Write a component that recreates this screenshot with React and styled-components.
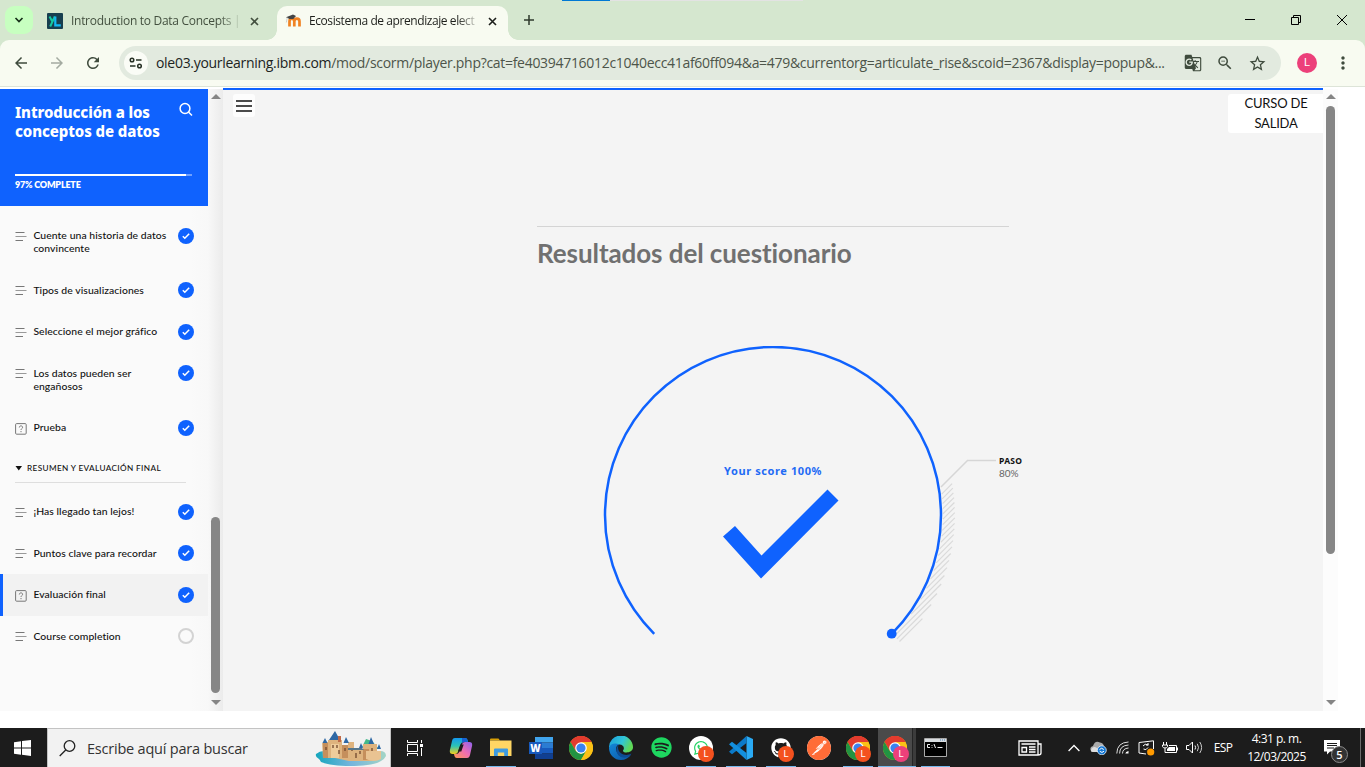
import React from "react";
import styled, { createGlobalStyle } from "styled-components";
import { MdArrowBack, MdArrowForward, MdRefresh, MdStarOutline, MdMoreVert, MdGTranslate, MdZoomOut } from "react-icons/md";
import { FaSpotify, FaWhatsapp, FaGithub } from "react-icons/fa";
import { SiPostman } from "react-icons/si";

const BLUE = "#0f62fe";
const UI = `"Open Sans", "Noto Sans", sans-serif`;
const LATO = `Lato, "Open Sans", sans-serif`;

const GlobalStyle = createGlobalStyle`
  * { box-sizing: border-box; }
  body { margin: 0; background: #fff; overflow: hidden; }
  svg { display: block; flex: none; }
`;

const Screen = styled.div`
  width: 1365px;
  height: 767px;
  display: flex;
  flex-direction: column;
  overflow: hidden;
  font-family: ${UI};
`;

/* ---------- browser frame ---------- */

const TabStrip = styled.header`
  position: relative;
  height: 40px;
  flex: none;
  display: flex;
  align-items: flex-start;
  padding: 6px 0 0 5px;
  background: #d5e7cf;
`;

const LoadStrip = styled.div`
  position: absolute;
  top: 0;
  left: 562px;
  width: 241px;
  height: 1px;
  background: linear-gradient(to right, #0078d4 48px, #e3e3e3 48px);
`;

const TabSearch = styled.div`
  width: 28px;
  height: 28px;
  border-radius: 9px;
  background: #c7ffc0;
  display: flex;
  align-items: center;
  justify-content: center;
`;

const Tab = styled.div`
  position: relative;
  display: flex;
  align-items: center;
  width: ${(p) => p.$width}px;
  height: 34px;
  margin-left: ${(p) => p.$gap}px;
  padding: 0 8px 4px 8px;
  border-radius: 10px 10px 0 0;
  background: ${(p) => (p.$active ? "#f8fbf1" : "transparent")};
  color: ${(p) => (p.$active ? "#1d1f1b" : "#43503f")};
  &::before,
  &::after {
    content: "";
    display: ${(p) => (p.$active ? "block" : "none")};
    position: absolute;
    bottom: 0;
    width: 10px;
    height: 10px;
  }
  &::before {
    left: -10px;
    background: radial-gradient(circle at 0 0, transparent 9.5px, #f8fbf1 10px);
  }
  &::after {
    right: -10px;
    background: radial-gradient(circle at 100% 0, transparent 9.5px, #f8fbf1 10px);
  }
`;

const TabTitle = styled.span`
  flex: none;
  width: 170px;
  margin: 0 ${(p) => p.$after}px 0 ${(p) => p.$before}px;
  font-size: 12px;
  letter-spacing: ${(p) => p.$spacing}px;
  line-height: 18px;
  white-space: nowrap;
  mask-image: linear-gradient(to right, #000 148px, transparent 172px);
`;

const NewTab = styled.div`
  margin: 8px 0 0 15px;
`;

const WindowButtons = styled.div`
  display: flex;
  margin-left: auto;
  height: 28px;
  svg { width: 46px; height: 28px; }
`;

const ToolbarBack = styled.div`
  background: #d5e7cf;
  flex: none;
`;

const Toolbar = styled.div`
  height: 46px;
  display: flex;
  align-items: center;
  flex: none;
  padding-left: 12px;
  border-radius: 9px 9px 0 0;
  background: #f8fbf1;
  color: #3f4b3d;
`;

const NavIcons = styled.div`
  display: flex;
  gap: 18px;
  width: 107px;
  .dim { color: #a4aba1; }
`;

const AddressBar = styled.div`
  display: flex;
  align-items: center;
  width: 1162px;
  height: 34px;
  padding: 0 14px 0 5px;
  border-radius: 17px;
  background: #e2eadf;
`;

const SiteInfo = styled.div`
  width: 24px;
  height: 24px;
  border-radius: 50%;
  background: #fafcf6;
  display: flex;
  align-items: center;
  justify-content: center;
`;

const Url = styled.div`
  flex: 1;
  margin-left: 8px;
  padding-bottom: 1px;
  font-size: 14px;
  letter-spacing: -0.298px;
  white-space: nowrap;
  color: #4d554a;
  b { font-weight: 400; color: #20241e; }
`;

const BarActions = styled.div`
  display: flex;
  align-items: center;
  gap: 14px;
`;

const Avatar = styled.div`
  width: 20px;
  height: 20px;
  margin: 0 16px 0 16px;
  border-radius: 50%;
  background: #ec407a;
  color: #fff;
  font: 11px/20px Roboto, sans-serif;
  text-align: center;
`;

/* ---------- course page ---------- */

const Page = styled.main`
  height: 625px;
  flex: none;
  display: flex;
  border-top: 1px solid #dde4d8;
  font-family: ${LATO};
  background: #fff;
`;

const Sidebar = styled.aside`
  width: 223px;
  height: 622px;
  margin-top: 2px;
  display: flex;
  background: linear-gradient(to right, #fafafa 190px, #f8f8f8 208px, #ebebeb 223px);
`;

const SidebarBody = styled.div`
  width: 208px;
`;

const CourseHead = styled.div`
  height: 117px;
  padding: 14px 15px 0 15px;
  background: ${BLUE};
  color: #fff;
`;

const CourseTop = styled.div`
  display: flex;
  justify-content: space-between;
  height: 71px;
  svg { margin-top: -1px; }
`;

const CourseTitle = styled.h1`
  margin: 0;
  font: 800 15px/19px "Noto Sans", sans-serif;
  letter-spacing: -0.1px;
  white-space: nowrap;
`;

const Progress = styled.div`
  width: 177px;
  height: 2px;
  background: linear-gradient(to right, #fff 171px, #6fa0fe 171px);
`;

const ProgressText = styled.div`
  margin-top: 3px;
  font-size: 9px;
  font-weight: 800;
  line-height: 12px;
  letter-spacing: -0.2px;
`;

const Lessons = styled.nav`
  padding-top: 9.3px;
`;

const Lesson = styled.div`
  display: flex;
  height: ${(p) => (p.$double ? 54.4 : 41.55)}px;
  padding: 14px 14px 0 ${(p) => (p.$active ? 12 : 15)}px;
  background: ${(p) => (p.$active ? "#f2f2f2" : "transparent")};
  border-left: ${(p) => (p.$active ? `3px solid ${BLUE}` : "0")};
`;

const LessonIcon = styled.div`
  width: 18.4px;
  padding-top: 1.4px;
`;

const LessonName = styled.div`
  flex: 1;
  white-space: pre;
  color: #111;
  font-size: 10.4px;
  line-height: 13px;
  font-weight: 500;
  letter-spacing: 0.07px;
`;

const Status = styled.div`
  width: 16px;
  height: 16px;
  margin-top: -1.5px;
  border-radius: 50%;
  background: ${(p) => (p.$done ? BLUE : "transparent")};
  border: ${(p) => (p.$done ? "0" : "2px solid #d3d3d3")};
  display: flex;
  align-items: center;
  justify-content: center;
`;

const Section = styled.div`
  display: flex;
  align-items: center;
  width: 171px;
  height: 34.5px;
  margin: 0 0 8px 15px;
  padding-top: 6px;
  border-bottom: 1px solid #dedede;
  color: #111;
  font-size: 8.2px;
  font-weight: 500;
  letter-spacing: 0.38px;
  white-space: nowrap;
  svg { margin-right: 4px; }
`;

const ScrollTrack = styled.div`
  width: 15px;
  height: 622px;
  margin-top: ${(p) => p.$top || 0}px;
  display: flex;
  flex-direction: column;
  align-items: center;
  background: ${(p) => p.$bg || "transparent"};
  padding: 5px 0 6px;
`;

const ScrollArrow = styled.i`
  border: 5px solid transparent;
  border-top: ${(p) => (p.$up ? "0" : "5px solid #858585")};
  border-bottom: ${(p) => (p.$up ? "5px solid #858585" : "0")};
`;

const ScrollThumb = styled.div`
  width: 9px;
  height: ${(p) => p.$height}px;
  margin-top: ${(p) => p.$offset}px;
  margin-bottom: auto;
  border-radius: 5px;
  background: #868686;
`;

const Content = styled.section`
  width: 1100px;
  height: 623px;
  margin-top: 1px;
  display: flex;
  flex-direction: column;
  border-top: 2px solid ${BLUE};
  background: #f4f4f4;
`;

const ContentBar = styled.div`
  height: 136px;
  display: flex;
  justify-content: space-between;
  align-items: flex-start;
  padding: 4px 0 0 10px;
`;

const MenuButton = styled.div`
  width: 22px;
  height: 23px;
  border-radius: 3px;
  background: #fdfdfd;
  display: flex;
  align-items: center;
  justify-content: center;
`;

const ExitLabel = styled.span`
  display: block;
  margin-top: -1px;
  padding-left: 1px;
`;

const ExitButton = styled.div`
  width: 95px;
  height: 39px;
  border-radius: 3px 0 0 3px;
  background: #fff;
  color: #111;
  text-align: center;
  font-size: 13px;
  line-height: 20px;
  letter-spacing: -0.2px;
  white-space: pre;
`;

const Results = styled.div`
  width: 520px;
  margin-left: 314px;
`;

const ResultsTitle = styled.h2`
  margin: 0;
  width: 472px;
  border-top: 1px solid #d4d4d4;
  padding-top: 9px;
  font-size: 26px;
  line-height: 34px;
  font-weight: 700;
  letter-spacing: -0.08px;
  color: #707070;
  white-space: nowrap;
`;

const Gauge = styled.div`
  position: relative;
  height: 320px;
  margin-top: 76px;
`;

const Score = styled.div`
  position: absolute;
  left: 187px;
  top: 117px;
  width: 98px;
  text-align: center;
  font: 700 11px/16px "Noto Sans", sans-serif;
  letter-spacing: 0.6px;
  color: #1f6bf5;
  white-space: nowrap;
`;

const PassMark = styled.div`
  position: absolute;
  left: 462px;
  top: 109px;
  font-size: 10px;
  line-height: 12px;
  color: #666;
  b { display: block; font: 700 8.5px/12px "Noto Sans", sans-serif; color: #111; letter-spacing: 0.3px; }
`;

/* ---------- taskbar ---------- */

const Desk = styled.footer`
  height: 39px;
  margin-top: auto;
  flex: none;
  display: flex;
  background: #1c1c1c;
  color: #fff;
`;

const StartButton = styled.div`
  width: 47px;
  display: flex;
  align-items: center;
  justify-content: center;
  padding-right: 2px;
`;

const SearchBox = styled.div`
  width: 344px;
  height: 39px;
  display: flex;
  align-items: center;
  padding: 1px 3px 0 11px;
  border: 1px solid #c3c3c3;
  border-bottom: 0;
  background: #f2f2f2;
  color: #333;
  font-size: 14.5px;
  letter-spacing: -0.21px;
  span { flex: 1; margin-left: 11px; white-space: nowrap; }
`;

const AppSlot = styled.div`
  position: relative;
  width: ${(p) => p.$width || 40}px;
  margin-left: ${(p) => p.$gap || 0}px;
  display: flex;
  align-items: center;
  justify-content: center;
  background: ${(p) => (p.$active ? "linear-gradient(to right, #4a4a4a 34px, #252525 34px, #252525 35px, #3c3c3c 35px)" : "transparent")};
  padding-right: ${(p) => (p.$active ? 4 : 0)}px;
  &::after {
    content: "";
    display: ${(p) => (p.$open ? "block" : "none")};
    position: absolute;
    bottom: 0;
    left: ${(p) => (p.$active ? 0 : 5)}px;
    right: ${(p) => (p.$active ? 0 : 5)}px;
    height: 1px;
    background: #76b9ed;
  }
`;

const Badge = styled.span`
  position: absolute;
  left: calc(50% - ${(p) => (p.$shift || 3)}px);
  top: 18px;
  width: 16px;
  height: 16px;
  border-radius: 50%;
  background: ${(p) => p.$color || "#f4511e"};
  color: #fff;
  font: 9.5px/16px Roboto, sans-serif;
  text-align: center;
`;

const Disc = styled.div`
  width: 24px;
  height: 24px;
  border-radius: 50%;
  display: flex;
  align-items: center;
  justify-content: center;
  background: ${(p) => p.$bg};
  color: ${(p) => p.$fg};
`;

const WordLetter = styled.span`
  position: absolute;
  left: 8px;
  top: 14px;
  width: 13px;
  height: 12px;
  background: #185abd;
  font: 800 10px/12px "Open Sans", sans-serif;
  text-align: center;
`;

const WordSlot = styled.div`
  padding-left: 6px;
`;

const Tray = styled.div`
  margin-left: auto;
  display: flex;
  align-items: center;
`;

const TrayIcon = styled.div`
  width: ${(p) => p.$width || 24}px;
  height: 39px;
  margin-right: ${(p) => p.$gap || 0}px;
  display: flex;
  align-items: center;
  justify-content: center;
`;

const Lang = styled.div`
  width: 34px;
  text-align: center;
  font-size: 12px;
  letter-spacing: -0.6px;
`;

const Clock = styled.div`
  width: 73px;
  margin-right: 1px;
  text-align: center;
  font-size: 12px;
  line-height: 18px;
  letter-spacing: -0.5px;
  white-space: nowrap;
  padding-top: 1px;
`;

const PeekLine = styled.div`
  width: 1px;
  height: 39px;
  margin: 0 4px 0 6px;
  background: #6b6b6b;
`;

const Count = styled.span`
  position: absolute;
  left: 17px;
  top: 18px;
  width: 17px;
  height: 17px;
  border: 1px solid #8a8a8a;
  border-radius: 50%;
  background: #333;
  font: 600 11px/15px "Open Sans", sans-serif;
  text-align: center;
`;

const NoticeSlot = styled.div`
  position: relative;
  width: 40px;
  height: 39px;
  padding: 12px 0 0 10px;
`;

/* ---------- drawings ---------- */

const CloseIcon = () => (
  <svg width="9" height="9" viewBox="0 0 9 9" stroke="currentColor" strokeWidth="1.6" fill="none"><path d="M1 1l7 7M8 1L1 8" /></svg>
);

const LearningLogo = () => (
  <svg width="16" height="16" viewBox="0 0 16 16" fill="none">
    <rect width="16" height="16" rx="1" fill="#173f4f" />
    <path d="M2.5 3.5L5 8M7.8 3.5L3.2 13.5" stroke="#16c9a2" strokeWidth="2" />
    <path d="M8.3 3.5v8.8h5.5" stroke="#12b9f5" strokeWidth="2.2" />
  </svg>
);

const MoodleLogo = () => (
  <svg width="17" height="16" viewBox="0 0 17 16" fill="none">
    <path d="M4.500 13.500V8.500c0-3.800 4.800-3.800 4.800 0v5M9.300 8.500c0-3.800 5.200-3.800 5.200 0v5" stroke="#f08223" strokeWidth="2.7" />
    <path d="M1 4.3L8 1.500l3 1.400L8.300 6H4.6z" fill="#444" /><path d="M2.3 4.5l-1 5" stroke="#bbb" strokeWidth=".7" />
  </svg>
);

const LinesIcon = () => (
  <svg width="12" height="12" viewBox="0 0 12 12" fill="none" strokeWidth="1">
    <path d="M0.5 1.5h9M.5 9.5h7.5" stroke="#777" /><path d="M.5 5.5h11" stroke="#999" />
  </svg>
);

const QuizIcon = () => (
  <svg width="12" height="12" viewBox="0 0 12 12" fill="none" stroke="#777">
    <rect x=".6" y=".6" width="10.6" height="10.6" rx="1" />
    <path d="M4.3 4.5c0-2.2 3.3-2.1 3.3-.2 0 1.2-1.6 1.3-1.6 2.7M6 8v1.2" />
  </svg>
);

const TickIcon = () => (
  <svg width="8" height="8" viewBox="0 0 8 8" fill="none" stroke="#fff" strokeWidth="1.5"><path d="M.8 4.2l2 2L7.2 1.7" /></svg>
);

const ChromeIcon = () => (
  <svg width="24" height="24" viewBox="0 0 24 24">
    <circle cx="12" cy="12" r="12" fill="#fbc116" />
    <path d="M12 12L1.6 6A12 12 0 0 1 22.4 6z" fill="#e33b2e" />
    <path d="M12 6h10.4a12 12 0 0 0-20.8 0L6.8 15z" fill="#e33b2e" />
    <path d="M1.6 6A12 12 0 0 0 12 24l5.2-9-5.2 3-5.2-3z" fill="#229342" />
    <path d="M12 6h10.4A12 12 0 0 1 12 24l5.2-9z" fill="#fbc116" />
    <circle cx="12" cy="12" r="5.8" fill="#fff" /><circle cx="12" cy="12" r="4.6" fill="#3b82f0" />
  </svg>
);

const CopilotIcon = () => (
  <svg width="24" height="22" viewBox="0 0 24 22">
    <defs>
      <linearGradient id="cpa" x1="0" y1="0" x2="0" y2="1"><stop offset="0" stopColor="#1499ef" /><stop offset=".5" stopColor="#2cc4b4" /><stop offset="1" stopColor="#f5cf1c" /></linearGradient>
      <linearGradient id="cpb" x1="1" y1="0" x2="0" y2="1"><stop offset="0" stopColor="#8d62f0" /><stop offset=".5" stopColor="#ee6db2" /><stop offset="1" stopColor="#ff9850" /></linearGradient>
    </defs>
    <path d="M6 1h10c2 0 2.5 1.5 3 4h-4c-2 0-3 1-3.6 3L9.300 14c-.6 2-1.500 3-3.500 3H3.500C.5 17 .5 14 1.200 12L3 4c.5-2 1.200-3 3-3z" fill="url(#cpa)" />
    <path d="M13 1h3c2 0 2.500 1.500 3 4h-4l-2 1z" fill="#1762d2" />
    <path d="M18 21H8c-2 0-2.500-1.500-3-4h2c2 0 3-1 3.600-3l2.200-6c.6-2 1.500-3 3.500-3h4.200c3 0 3 3 2.300 5L21 18c-.5 2-1.200 3-3 3z" fill="url(#cpb)" />
    <path d="M11.300 7.500h3.400l-2.400 7H8.900z" fill="#1c1c1c" />
  </svg>
);

const FolderIcon = () => (
  <svg width="22" height="19" viewBox="0 0 22 19">
    <path d="M0 1.500Q0 .5 1 .5h7.500l1.500 2h-10z" fill="#d9a006" /><path d="M0 2.500h21.500V18H0z" fill="#ffd664" />
    <path d="M4 18v-6.500q0-1 1-1h12q1 0 1 1V18h-3.800v-3.500H7.800V18z" fill="#3f9be0" />
  </svg>
);

const WordPages = () => (
  <svg width="18" height="22" viewBox="0 0 18 22">
    <path d="M0 0h18v5.500H0z" fill="#41a5ee" /><path d="M0 5.500h18V11H0z" fill="#2b7cd3" /><path d="M0 11h18v5.500H0z" fill="#185abd" /><path d="M0 16.500h18V22H0z" fill="#103f91" />
  </svg>
);

const EdgeIcon = () => (
  <svg width="24" height="24" viewBox="0 0 24 24">
    <defs>
      <linearGradient id="ega" x1="0" y1="0" x2="1" y2=".4"><stop offset="0" stopColor="#199bdb" /><stop offset=".6" stopColor="#31c6d8" /><stop offset="1" stopColor="#60d957" /></linearGradient>
      <linearGradient id="egb" x1="0" y1="0" x2="1" y2="1"><stop offset="0" stopColor="#1487d8" /><stop offset="1" stopColor="#0b55a4" /></linearGradient>
    </defs>
    <path d="M0 12A12 12 0 0 1 24 11c.2 4-3.500 5.500-6.500 5.500-3 0-4-1.500-3.200-2.500 1.500-2 .2-5.500-4-5.500C5 8.500 1 11 0 12z" fill="url(#ega)" />
    <path d="M0 12C1 7 7 6.500 10.300 8.500 7 9.500 6.800 12.500 7.500 15c1.200 4 6 6.500 10 5.500 2-.5 4-1.500 4.800-2.300C20 22 16 24 12 24A12 12 0 0 1 0 12z" fill="url(#egb)" />
    <path d="M10.500 8.600C8 10.500 9 15 12 17.300c3 2.300 7.500 2 10.500.3-1.500 3-5 4.500-8.500 4C8 21 4.500 12 10.500 8.600z" fill="#0d4c94" />
  </svg>
);

const CodeIcon = () => (
  <svg width="24" height="24" viewBox="0 0 24 24">
    <path d="M17.500 0L24 3v18l-6.500 3z" fill="#2aaaf3" />
    <path d="M17.500 0v7L3 18.300 0 15.700z" fill="#0b7ac9" /><path d="M17.500 24v-7L3 5.700 0 8.300z" fill="#138fdd" />
  </svg>
);

const TerminalIcon = () => (
  <svg width="23" height="19" viewBox="0 0 23 19">
    <path d="M.5.5h22v18H.5z" fill="#000" stroke="#aaa" /><path d="M1 1h21v3H1z" fill="#d9dde0" /><path d="M16 2h1M18 2h1M20 2h1" stroke="#4a80b5" />
    <path d="M6 6.500H3.500v3H6M8 7v.8M8 9v.8M10 6l1.500 4M13.500 9.500h5" stroke="#eee" fill="none" />
  </svg>
);

const Castle = () => (
  <svg width="72" height="36" viewBox="0 0 72 36">
    <defs><linearGradient id="sea" x1="0" y1="0" x2="1" y2="0"><stop offset="0" stopColor="#16a6bd" /><stop offset=".5" stopColor="#75b5dd" /><stop offset="1" stopColor="#a3d5c6" /></linearGradient></defs>
    <path d="M1 23q6-5 12-2l52-1q6 0 6 5-2 4-5 5c-8 6-46 7-60 1q-1-2-2-3Q0 26 1 23z" fill="url(#sea)" />
    <path d="M47 16l4-8 6 2 7 8z" fill="#43b98a" />
    <path d="M7 12l6-1V9h14v5h6V11h6v7h9v-5h14v12l-5 5H34l-14-3H8z" fill="#deb37e" />
    <path d="M8 12h5v15H8zM27 14h6v13h-6zM48 18h6v11h-6z" fill="#c58f5c" />
    <path d="M51 20h15v8q-7 4-15 0z" fill="#e9c392" /><path d="M16 13h8v14h-8z" fill="#efcc9b" />
    <path d="M14 9l6-9 5 9zM7.500 12l2.500-5 2.500 5zM28.500 12L31 6l3 6zM53.500 13L56 6l3 7zM44 17l2-5 2 5zM62 18l2-5 2 5z" fill="#2e68a5" />
    <path d="M23 5h3v6h-3z" fill="#c06a48" />
    <path d="M18 14v3M22 14v3M11 16v3M37 17v3M30 17v3M45 20v3M57 17v3M41 22v5M24 19v4" stroke="#70492f" strokeWidth="1.300" />
    <path d="M33 17h14l2 2H33z" fill="#56768b" />
  </svg>
);

const CX = 236;
const CY = 169;
const hatches = Array.from({ length: 21 }, (_, i) => {
  const d = 178.9 - i * 3.72;
  const inner = d < 170 ? Math.sqrt(170 * 170 - d * d) : 0;
  const outer = Math.sqrt(181.8 * 181.8 - d * d);
  const at = (t) => `${(CX + (d + t) * Math.SQRT1_2).toFixed(1)} ${(CY + (d - t) * Math.SQRT1_2).toFixed(1)}`;
  return `M${at(inner)}L${at(outer)}`;
}).join("");

const GaugeArt = () => (
  <svg width="480" height="320" viewBox="0 0 480 320" fill="none">
    <path d={hatches} stroke="#dadada" strokeWidth="1.200" />
    <path d="M404 141L430.500 114.500H459" stroke="#d6d6d6" strokeWidth="1.500" />
    <path d="M117.200 287.800A168 168 0 1 1 354.800 287.800" stroke={BLUE} strokeWidth="2.500" />
    <circle cx="354.700" cy="287.700" r="4.900" fill={BLUE} />
    <path d="M186 190.500L198 180 224.500 209.500 290.500 143.500 301.500 154.500 224 232.500z" fill={BLUE} />
  </svg>
);

const lessonsA = [
  ["Cuente una historia de datos\nconvincente", "text"],
  ["Tipos de visualizaciones", "text"],
  ["Seleccione el mejor gráfico", "text"],
  ["Los datos pueden ser\nengañosos", "text"],
  ["Prueba", "quiz"],
];
const lessonsB = [
  ["¡Has llegado tan lejos!", "text"],
  ["Puntos clave para recordar", "text"],
  ["Evaluación final", "quiz", true],
  ["Course completion", "text", false, true],
];

const LessonRow = ({ item: [name, kind, active, open] }) => (
  <Lesson $double={name.includes("\n")} $active={active}>
    <LessonIcon>{kind === "quiz" ? <QuizIcon /> : <LinesIcon />}</LessonIcon>
    <LessonName>{name}</LessonName>
    <Status $done={!open}>{!open && <TickIcon />}</Status>
  </Lesson>
);

const Browser = () => (
  <>
    <TabStrip>
      <LoadStrip />
      <TabSearch><svg width="10" height="6" viewBox="0 0 10 6" fill="none" stroke="#17301a" strokeWidth="1.700"><path d="M1.500 1L5 4.500 8.500 1" /></svg></TabSearch>
      <Tab $width={230} $gap={6}><LearningLogo /><TabTitle $spacing={-0.29} $before={8} $after={9}>Introduction to Data Concepts |</TabTitle><CloseIcon /></Tab>
      <Tab $width={231} $gap={8} $active><MoodleLogo /><TabTitle $spacing={-0.42} $before={7} $after={9}>Ecosistema de aprendizaje elect</TabTitle><CloseIcon /></Tab>
      <NewTab><svg width="12" height="12" viewBox="0 0 12 12" stroke="#2e3a2c" strokeWidth="1.500"><path d="M6 1v10M1 6h10" /></svg></NewTab>
      <WindowButtons>
        <svg viewBox="0 0 46 28" stroke="#000" fill="none"><path d="M18 13.500h10" /></svg>
        <svg viewBox="0 0 46 28" stroke="#000" fill="none"><path d="M18.500 11.500h7v7h-7zM20.500 11.500v-2h7v7h-2" /></svg>
        <svg viewBox="0 0 46 28" stroke="#000" fill="none"><path d="M18 9l10 10M28 9L18 19" /></svg>
      </WindowButtons>
    </TabStrip>
    <ToolbarBack>
      <Toolbar>
        <NavIcons><MdArrowBack size={18} /><MdArrowForward className="dim" size={18} /><MdRefresh size={18} /></NavIcons>
        <AddressBar>
          <SiteInfo>
            <svg width="14" height="12" viewBox="0 0 14 12" fill="none" stroke="#263024" strokeWidth="1.500"><circle cx="3" cy="3" r="1.800" /><path d="M7 3h5.500M1 9h5.500" /><circle cx="10.500" cy="9" r="1.800" /></svg>
          </SiteInfo>
          <Url><b>ole03.yourlearning.ibm.com</b>/mod/scorm/player.php?cat=fe40394716012c1040ecc41af60ff094&amp;a=479&amp;currentorg=articulate_rise&amp;scoid=2367&amp;display=popup&amp;...</Url>
          <BarActions><MdGTranslate size={18} /><MdZoomOut size={18} /><MdStarOutline size={19} /></BarActions>
        </AddressBar>
        <Avatar>L</Avatar>
        <MdMoreVert size={20} />
      </Toolbar>
    </ToolbarBack>
  </>
);

const Course = () => (
  <Page>
    <Sidebar>
      <SidebarBody>
        <CourseHead>
          <CourseTop>
            <CourseTitle>Introducción a los<br />conceptos de datos</CourseTitle>
            <svg width="14" height="15" viewBox="0 0 14 15" fill="none" stroke="#fff" strokeWidth="1.500"><circle cx="6" cy="6.500" r="4.900" /><path d="M9.500 10l3.500 3.500" /></svg>
          </CourseTop>
          <Progress />
          <ProgressText>97% COMPLETE</ProgressText>
        </CourseHead>
        <Lessons>
          {lessonsA.map((l) => <LessonRow key={l[0]} item={l} />)}
          <Section><svg width="8" height="5" viewBox="0 0 8 5"><path d="M.5 0h6.500L3.800 4.500z" fill="#111" /></svg>RESUMEN Y EVALUACIÓN FINAL</Section>
          {lessonsB.map((l) => <LessonRow key={l[0]} item={l} />)}
        </Lessons>
      </SidebarBody>
      <ScrollTrack><ScrollArrow $up /><ScrollThumb $height={176} $offset={418} /><ScrollArrow /></ScrollTrack>
    </Sidebar>
    <Content>
      <ContentBar>
        <MenuButton><svg width="16" height="12" viewBox="0 0 16 12" stroke="#111" strokeWidth="1.700"><path d="M0 1h16M0 6h16M0 11h16" /></svg></MenuButton>
        <ExitButton><ExitLabel>{"CURSO DE\nSALIDA"}</ExitLabel></ExitButton>
      </ContentBar>
      <Results>
        <ResultsTitle>Resultados del cuestionario</ResultsTitle>
        <Gauge>
          <GaugeArt />
          <Score>Your score 100%</Score>
          <PassMark><b>PASO</b>80%</PassMark>
        </Gauge>
      </Results>
    </Content>
    <ScrollTrack $bg="#fcfcfc" $top={2}><ScrollArrow $up /><ScrollThumb $height={448} $offset={7} /><ScrollArrow /></ScrollTrack>
  </Page>
);

const Taskbar = () => (
  <Desk>
    <StartButton><svg width="17" height="16" viewBox="0 0 17 16" fill="#fff"><path d="M0 2.200l7-1v6.300H0zM8 1l9-1v7.500H8zM0 8.500h7v6.300l-7-1zM8 8.500h9V16l-9-1.200z" /></svg></StartButton>
    <SearchBox>
      <svg width="17" height="17" viewBox="0 0 17 17" fill="none" stroke="#222" strokeWidth="1.300"><circle cx="10.500" cy="6" r="5.300" /><path d="M6.700 10L.7 16" /></svg>
      <span>Escribe aquí para buscar</span>
      <Castle />
    </SearchBox>
    <AppSlot $gap={4}><svg width="18" height="16" viewBox="0 0 18 16" fill="none" stroke="#fff"><path d="M1.500 0v2.500h10V0M1.500 4.500h10v7h-10zM1.500 16v-2.500h10V16M15.500 0v3M15.500 8v8" /><path d="M14 4h3v3h-3z" fill="#fff" stroke="none" /></svg></AppSlot>
    <AppSlot $gap={6}><CopilotIcon /></AppSlot>
    <AppSlot $open><FolderIcon /></AppSlot>
    <AppSlot><WordSlot><WordPages /></WordSlot><WordLetter>W</WordLetter></AppSlot>
    <AppSlot><ChromeIcon /></AppSlot>
    <AppSlot><EdgeIcon /></AppSlot>
    <AppSlot><FaSpotify size={21} color="#1ed760" /></AppSlot>
    <AppSlot $open><Disc $bg="#fff" $fg="#25d366"><FaWhatsapp size={16} /></Disc><Badge $shift={3}>L</Badge></AppSlot>
    <AppSlot $open><CodeIcon /></AppSlot>
    <AppSlot $open><FaGithub size={20} color="#fff" /><Badge $shift={3}>L</Badge></AppSlot>
    <AppSlot $width={38} $gap={-1}><Disc $bg="#fff" $fg="#ff6c37"><SiPostman size={24} /></Disc></AppSlot>
    <AppSlot $open><ChromeIcon /><Badge>L</Badge></AppSlot>
    <AppSlot $open $active $width={38}><ChromeIcon /><Badge $color="#ec407a" $shift={4}>L</Badge></AppSlot>
    <AppSlot $open $width={39}><TerminalIcon /></AppSlot>
    <Tray>
      <TrayIcon $width={24} $gap={20}><svg width="24" height="16" viewBox="0 0 24 16" fill="none" stroke="#fff" strokeWidth="1.300"><path d="M1 1h19v14H1zM20 4h3v9q0 2-3 2M3.500 4h14M11 7h6.500M11 9.500h6.500M11 12h6.500" /><path d="M4 7.500h4.500V12H4z" /></svg></TrayIcon>
      <TrayIcon><svg width="12" height="8" viewBox="0 0 12 8" fill="none" stroke="#fff" strokeWidth="1.300"><path d="M.6 7L6 1.500 11.400 7" /></svg></TrayIcon>
      <TrayIcon><svg width="17" height="14" viewBox="0 0 17 14"><path d="M1 10Q-1 6 3 5 5-1 10 1.500q4 .5 4 5L8 11H3z" fill="#aaa" /><path d="M1 10q0-4 4-4l6 3-2 2H3q-2 0-2-1z" fill="#ddd" /><circle cx="11.800" cy="9.300" r="4.500" fill="#1477d4" stroke="#fff" strokeWidth=".7" /><path d="M9.500 8.500q2-2.500 4.300 0M14 10.200q-2 2.500-4.300 0" stroke="#fff" fill="none" /></svg></TrayIcon>
      <TrayIcon><svg width="13" height="13" viewBox="0 0 13 13" fill="none" stroke="#ddd"><path d="M.8 12.500Q1 1.500 12.500 1M3.600 12.500Q3.600 4.500 12.500 4M6.500 12.500Q6.500 7.500 12.500 7" /><path d="M9.300 12.500Q9.500 10.500 12.500 10v2.500z" fill="#fff" stroke="none" /></svg></TrayIcon>
      <TrayIcon><svg width="17" height="16" viewBox="0 0 17 16" fill="none" stroke="#fff"><path d="M15.500 9V.8L1 2.500V13l7 1M5 6q2-3 5-1V3M10.500 5H8M10 7.500q-2 3.500-4.500 1.500" /><circle cx="12.700" cy="12" r="3.600" fill="#ff9a00" stroke="none" /></svg></TrayIcon>
      <TrayIcon><svg width="17" height="12" viewBox="0 0 17 12" fill="none" stroke="#fff"><path d="M1.500 0v3M4.500 0v3M.5 3h5v1.500Q5 6 3 6T.5 4.500zM3 6v4.500h11.500v-7H7M15.500 5.500v3" /><path d="M7 5h6v4H5V7z" fill="#fff" stroke="none" /></svg></TrayIcon>
      <TrayIcon><svg width="17" height="13" viewBox="0 0 17 13" fill="none" stroke="#fff"><path d="M.5 4.500h2.500l3.500-3.500v11L3 8.500H.5zM9 4.500q1.200 2 0 4" /><path d="M11.300 2.800q2.400 3.700 0 7.400M13.800 1q3.600 5.500 0 11" stroke="#ccc" /></svg></TrayIcon>
      <Lang>ESP</Lang>
      <Clock>4:31 p. m.<br />12/03/2025</Clock>
      <NoticeSlot>
        <svg width="16" height="15" viewBox="0 0 16 15"><path d="M0 0h16v11.500H6L3 14.500v-3H0z" fill="#fff" /><path d="M3 3.500h10M3 5.500h10M3 8h7" stroke="#1c1c1c" /></svg>
        <Count>5</Count>
      </NoticeSlot>
      <PeekLine />
    </Tray>
  </Desk>
);

export default function App() {
  return (
    <Screen>
      <GlobalStyle />
      <Browser />
      <Course />
      <Taskbar />
    </Screen>
  );
}
